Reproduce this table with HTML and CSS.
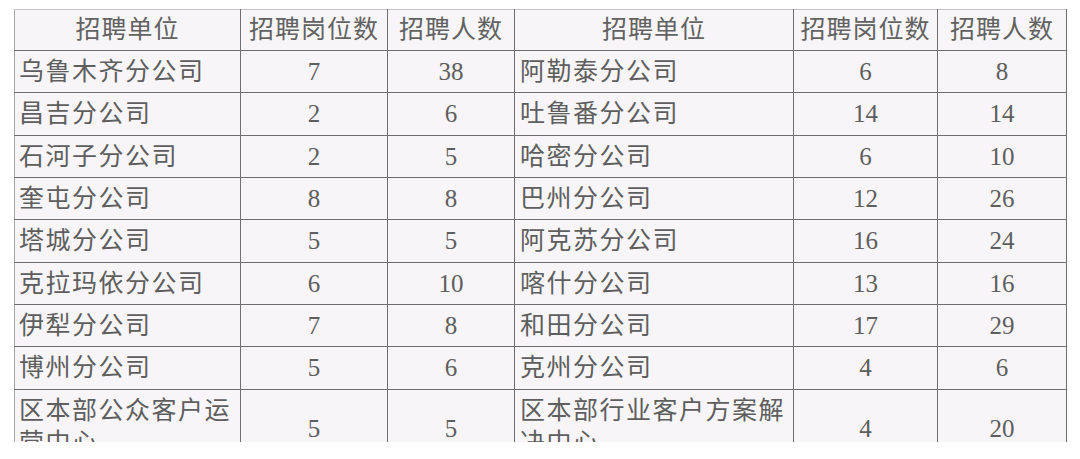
FILE: index.html
```html
<!DOCTYPE html>
<html lang="zh-CN">
<head>
<meta charset="utf-8">
<title>招聘单位</title>
<link rel="stylesheet" href="styles.css">
</head>
<body>
<div class="sheet">
  <table class="grid">
    <colgroup>
      <col class="c1"><col class="c2"><col class="c3"><col class="c4"><col class="c5"><col class="c6">
    </colgroup>
    <thead>
      <tr class="head">
        <th>招聘单位</th><th>招聘岗位数</th><th>招聘人数</th><th>招聘单位</th><th>招聘岗位数</th><th>招聘人数</th>
      </tr>
    </thead>
    <tbody>
      <tr class="r42"><td class="name">乌鲁木齐分公司</td><td class="num">7</td><td class="num">38</td><td class="name">阿勒泰分公司</td><td class="num">6</td><td class="num">8</td></tr>
      <tr class="r43"><td class="name">昌吉分公司</td><td class="num">2</td><td class="num">6</td><td class="name">吐鲁番分公司</td><td class="num">14</td><td class="num">14</td></tr>
      <tr class="r42"><td class="name">石河子分公司</td><td class="num">2</td><td class="num">5</td><td class="name">哈密分公司</td><td class="num">6</td><td class="num">10</td></tr>
      <tr class="r42"><td class="name">奎屯分公司</td><td class="num">8</td><td class="num">8</td><td class="name">巴州分公司</td><td class="num">12</td><td class="num">26</td></tr>
      <tr class="r43"><td class="name">塔城分公司</td><td class="num">5</td><td class="num">5</td><td class="name">阿克苏分公司</td><td class="num">16</td><td class="num">24</td></tr>
      <tr class="r42"><td class="name">克拉玛依分公司</td><td class="num">6</td><td class="num">10</td><td class="name">喀什分公司</td><td class="num">13</td><td class="num">16</td></tr>
      <tr class="r42"><td class="name">伊犁分公司</td><td class="num">7</td><td class="num">8</td><td class="name">和田分公司</td><td class="num">17</td><td class="num">29</td></tr>
      <tr class="r43"><td class="name">博州分公司</td><td class="num">5</td><td class="num">6</td><td class="name">克州分公司</td><td class="num">4</td><td class="num">6</td></tr>
      <tr class="tall"><td class="name wrap">区本部公众客户运营中心</td><td class="num">5</td><td class="num">5</td><td class="name wrap">区本部行业客户方案解决中心</td><td class="num">4</td><td class="num">20</td></tr>
    </tbody>
  </table>
</div>
</body>
</html>
```

FILE: styles.css
```css
html, body {
  margin: 0;
  padding: 0;
  background: #ffffff;
}

.sheet {
  height: 442px;
  overflow: hidden;
  padding: 9px 0 0 14px;
  box-sizing: border-box;
}

.grid {
  table-layout: fixed;
  border-collapse: collapse;
  width: 1052px;
  background: #f7f5f7;
  font-family: "Liberation Serif", "Noto Sans CJK SC", serif;
  font-size: 25px;
  color: #5e5e5e;
}

.c1 { width: 226px; }
.c2 { width: 147px; }
.c3 { width: 127px; }
.c4 { width: 279px; }
.c5 { width: 144px; }
.c6 { width: 129px; }

.grid th,
.grid td {
  border: 1px solid #6e6e6e;
  padding: 0;
  overflow: hidden;
  white-space: nowrap;
  line-height: 30px;
  letter-spacing: 1.5px;
}

.grid tr > :first-child {
  border-left-color: #a8a8a8;
}

.grid .head th {
  border-top-color: #c4c4c4;
  font-weight: normal;
  text-align: center;
  color: #626262;
  letter-spacing: 1px;
}

.head { height: 41px; }
.r42 { height: 42px; }
.r43 { height: 43px; }
.tall { height: 78px; }

.grid td.name {
  text-align: left;
  padding-left: 4px;
}

.grid td:nth-child(4) {
  padding-left: 5px;
}

.grid td.num {
  text-align: center;
  letter-spacing: 0;
}

.grid td.wrap {
  white-space: normal;
  word-break: break-all;
  vertical-align: top;
  padding-top: 5px;
  line-height: 32px;
}
```
